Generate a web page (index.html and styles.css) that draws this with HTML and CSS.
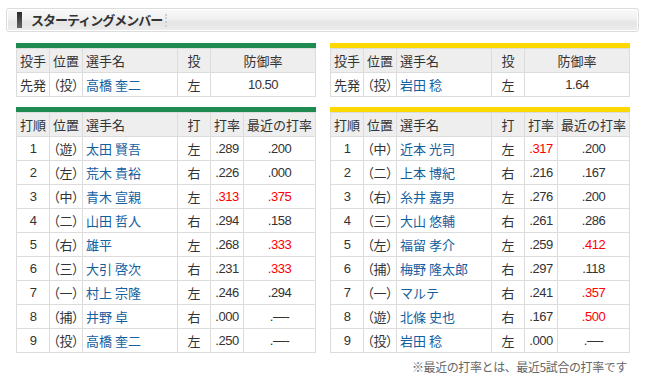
FILE: index.html
```html
<!DOCTYPE html>
<html lang="ja">
<head>
<meta charset="utf-8">
<link rel="stylesheet" href="styles.css">
</head>
<body>
<div class="title">
  <span class="title-bar"></span>
  <h2 class="title-text">スターティングメンバー</h2>
  <span class="title-sep"></span>
</div>

<div class="pair pitchers">
  <div class="team carp">
    <table class="tbl">
      <colgroup><col class="c1"><col class="c2"><col class="c3"><col class="c4"><col class="c5w"></colgroup>
      <tr class="head"><th>投手</th><th>位置</th><th class="name">選手名</th><th>投</th><th>防御率</th></tr>
      <tr><td>先発</td><td class="pos">（投）</td><td class="name"><a>高橋 奎二</a></td><td>左</td><td class="num">10.50</td></tr>
    </table>
  </div>
  <div class="team tigers">
    <table class="tbl">
      <colgroup><col class="c1"><col class="c2"><col class="c3"><col class="c4"><col class="c5w"></colgroup>
      <tr class="head"><th>投手</th><th>位置</th><th class="name">選手名</th><th>投</th><th>防御率</th></tr>
      <tr><td>先発</td><td class="pos">（投）</td><td class="name"><a>岩田 稔</a></td><td>左</td><td class="num">1.64</td></tr>
    </table>
  </div>
</div>

<div class="pair batters">
  <div class="team carp">
    <table class="tbl">
      <colgroup><col class="c1"><col class="c2"><col class="c3"><col class="c4"><col class="c5"><col class="c6"></colgroup>
      <tr class="head"><th>打順</th><th>位置</th><th class="name">選手名</th><th>打</th><th>打率</th><th>最近の打率</th></tr>
      <tr><td class="num">1</td><td class="pos">（遊）</td><td class="name"><a>太田 賢吾</a></td><td>左</td><td class="num">.289</td><td class="num">.200</td></tr>
      <tr><td class="num">2</td><td class="pos">（左）</td><td class="name"><a>荒木 貴裕</a></td><td>右</td><td class="num">.226</td><td class="num">.000</td></tr>
      <tr><td class="num">3</td><td class="pos">（中）</td><td class="name"><a>青木 宣親</a></td><td>左</td><td class="num hot">.313</td><td class="num hot">.375</td></tr>
      <tr><td class="num">4</td><td class="pos">（二）</td><td class="name"><a>山田 哲人</a></td><td>右</td><td class="num">.294</td><td class="num">.158</td></tr>
      <tr><td class="num">5</td><td class="pos">（右）</td><td class="name"><a>雄平</a></td><td>左</td><td class="num">.268</td><td class="num hot">.333</td></tr>
      <tr><td class="num">6</td><td class="pos">（三）</td><td class="name"><a>大引 啓次</a></td><td>右</td><td class="num">.231</td><td class="num hot">.333</td></tr>
      <tr><td class="num">7</td><td class="pos">（一）</td><td class="name"><a>村上 宗隆</a></td><td>左</td><td class="num">.246</td><td class="num">.294</td></tr>
      <tr><td class="num">8</td><td class="pos">（捕）</td><td class="name"><a>井野 卓</a></td><td>右</td><td class="num">.000</td><td class="num">.―-</td></tr>
      <tr><td class="num">9</td><td class="pos">（投）</td><td class="name"><a>高橋 奎二</a></td><td>左</td><td class="num">.250</td><td class="num">.―-</td></tr>
    </table>
  </div>
  <div class="team tigers">
    <table class="tbl">
      <colgroup><col class="c1"><col class="c2"><col class="c3"><col class="c4"><col class="c5"><col class="c6"></colgroup>
      <tr class="head"><th>打順</th><th>位置</th><th class="name">選手名</th><th>打</th><th>打率</th><th>最近の打率</th></tr>
      <tr><td class="num">1</td><td class="pos">（中）</td><td class="name"><a>近本 光司</a></td><td>左</td><td class="num hot">.317</td><td class="num">.200</td></tr>
      <tr><td class="num">2</td><td class="pos">（二）</td><td class="name"><a>上本 博紀</a></td><td>右</td><td class="num">.216</td><td class="num">.167</td></tr>
      <tr><td class="num">3</td><td class="pos">（右）</td><td class="name"><a>糸井 嘉男</a></td><td>左</td><td class="num">.276</td><td class="num">.200</td></tr>
      <tr><td class="num">4</td><td class="pos">（三）</td><td class="name"><a>大山 悠輔</a></td><td>右</td><td class="num">.261</td><td class="num">.286</td></tr>
      <tr><td class="num">5</td><td class="pos">（左）</td><td class="name"><a>福留 孝介</a></td><td>左</td><td class="num">.259</td><td class="num hot">.412</td></tr>
      <tr><td class="num">6</td><td class="pos">（捕）</td><td class="name"><a>梅野 隆太郎</a></td><td>右</td><td class="num">.297</td><td class="num">.118</td></tr>
      <tr><td class="num">7</td><td class="pos">（一）</td><td class="name"><a>マルテ</a></td><td>右</td><td class="num">.241</td><td class="num hot">.357</td></tr>
      <tr><td class="num">8</td><td class="pos">（遊）</td><td class="name"><a>北條 史也</a></td><td>右</td><td class="num">.167</td><td class="num hot">.500</td></tr>
      <tr><td class="num">9</td><td class="pos">（投）</td><td class="name"><a>岩田 稔</a></td><td>左</td><td class="num">.000</td><td class="num">.―-</td></tr>
    </table>
  </div>
</div>

<p class="note">※最近の打率とは、最近5試合の打率です</p>
</body>
</html>
```

FILE: styles.css
```css
html, body {
  margin: 0;
  padding: 0;
  background: #fff;
}
body {
  font-family: "Liberation Sans", "Noto Sans CJK JP", sans-serif;
  font-size: 13px;
  color: #333;
}

.title {
  margin: 8px 7px 0 6px;
  height: 22px;
  border: 1px solid #dcdcdc;
  border-radius: 3px;
  box-shadow: inset 0 0 0 1px #fff;
  background: linear-gradient(#f9f9f9 0%, #f1f1f1 45%, #e5e5e5 60%, #ececec 100%);
  display: flex;
  align-items: center;
  padding-left: 10px;
}
.title-bar {
  width: 5px;
  height: 16px;
  background: linear-gradient(#2a2a2a, #666);
}
.title-text {
  margin: 0 0 0 9px;
  font-family: "Noto Sans CJK JP", sans-serif;
  font-size: 13px;
  font-weight: bold;
  letter-spacing: -1px;
  color: #333;
  line-height: 16px;
}
.title-sep {
  width: 0;
  height: 13px;
  margin-left: 3px;
  border-left: 2px dotted #cfcfcf;
}

.pair {
  display: flex;
  gap: 14px;
  padding: 0 16px;
}
.pitchers { margin-top: 11px; }
.batters { margin-top: 10px; }

.team {
  width: 300px;
  border-top: 5px solid;
}
.carp { border-top-color: #1f8a4f; }
.tigers { border-top-color: #ffd800; }

.tbl {
  width: 300px;
  table-layout: fixed;
  border-collapse: collapse;
}
.tbl col.c1, .tbl col.c2, .tbl col.c4, .tbl col.c5 { width: 33px; }
.tbl col.c3 { width: 95px; }
.tbl tr { height: 24px; }
.tbl th, .tbl td {
  border: 1px solid #dcdcdc;
  padding: 0;
  text-align: center;
  font-weight: normal;
  white-space: nowrap;
  line-height: 16px;
  font-family: "Noto Sans CJK JP", sans-serif;
}
.tbl .head th { background: #eeeeee; }
.tbl td.pos { font-feature-settings: "palt"; }
.tbl th.name, .tbl td.name { text-align: left; padding-left: 3px; }
.tbl td.name a { color: #13609f; text-decoration: none; }
.tbl td.num { font-family: "Liberation Sans", sans-serif; letter-spacing: -0.5px; }
.tbl td.hot { color: #ff0000; }

.note {
  margin: 7px 19px 0 0;
  text-align: right;
  font-family: "Noto Sans CJK JP", sans-serif;
  font-size: 12px;
  letter-spacing: -0.4px;
  color: #666;
  line-height: 14px;
}
```
